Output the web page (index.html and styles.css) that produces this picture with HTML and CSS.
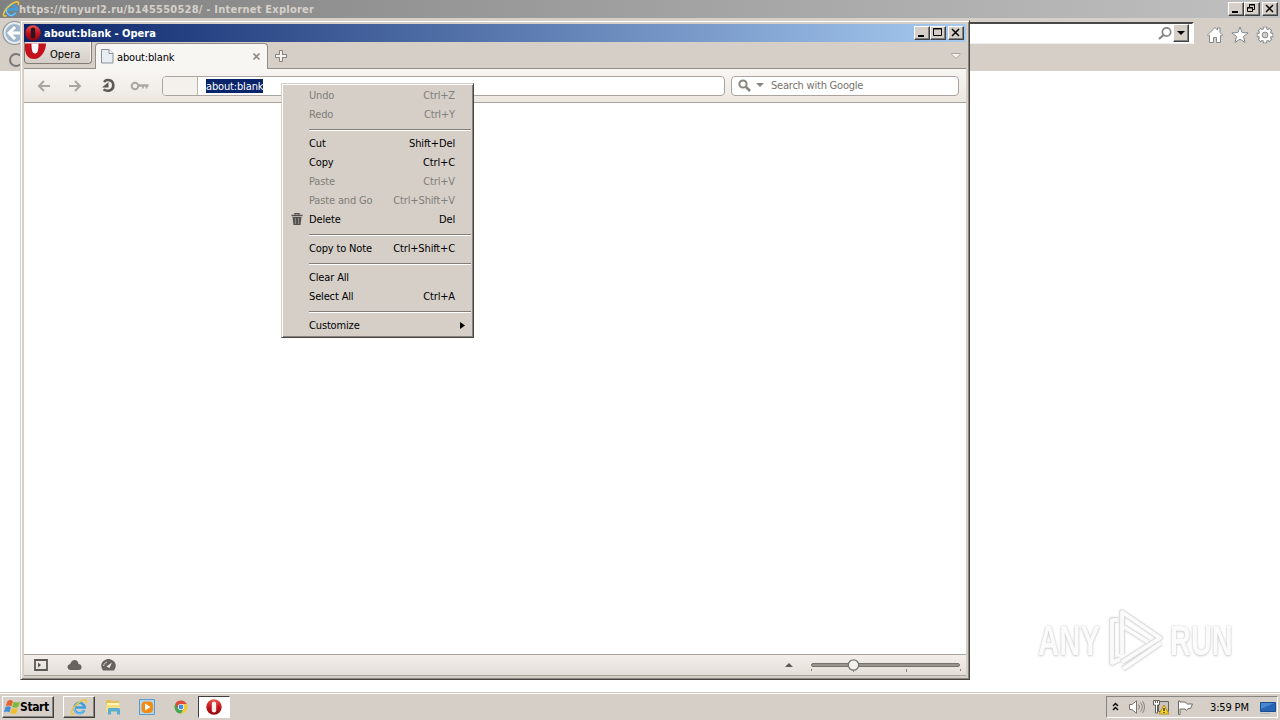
FILE: index.html
```html
<!DOCTYPE html>
<html lang="en">
<head>
<meta charset="utf-8">
<title>Desktop</title>
<link rel="stylesheet" href="styles.css">
</head>
<body>
<svg class="defs" width="0" height="0">
  <defs>
    <linearGradient id="red" x1="0" y1="0" x2="0" y2="1"><stop offset="0" stop-color="#e8574c"/><stop offset=".5" stop-color="#c5141c"/><stop offset="1" stop-color="#8c060c"/></linearGradient>
  </defs>
  <symbol id="ie" viewBox="0 0 18 18">
    <path d="M14.200 12.300A5.200 5.200 0 1 1 14.700 9.600H5.500" fill="none" stroke="#3d9fe2" stroke-width="2.500"/>
    <path d="M13.500 12.600A4.600 4.600 0 0 1 4.800 9" fill="none" stroke="#8fd4f7" stroke-width=".9"/>
    <path d="M4.500 15.600C.5 17.500 .2 13.500 5 8 9.500 3 16 .2 16.500 2.600q.2 1.200-.6 2.600" fill="none" stroke="#efc63c" stroke-width="1.500"/>
  </symbol>
  <symbol id="opera" viewBox="0 0 16 16">
    <circle cx="8" cy="8" r="7.700" fill="url(#red)"/>
    <rect x="5.800" y="2.600" width="4.400" height="10.800" rx="2.200" fill="currentColor"/>
  </symbol>
</svg>
<main class="desktop">
  <section class="ie">
    <header class="ie-title">
      <svg class="ie-logo" width="18" height="18"><use href="#ie"/></svg>
      <span class="ie-name">https://tinyurl2.ru/b145550528/ - Internet Explorer</span>
      <div class="controls">
        <span class="wbtn"><svg width="14" height="12"><path d="M3 9h6" stroke="#000" stroke-width="2"/></svg></span>
        <span class="wbtn"><svg width="14" height="12"><path d="M4.500 4V1.500h5v5H8M4 2h6M2.500 4.500h5v4h-5zM2 5h6" fill="none" stroke="#000"/></svg></span>
        <span class="wbtn gap"><svg width="14" height="12"><path d="M3 2l7 7M10 2L3 9" stroke="#000" stroke-width="1.500"/></svg></span>
      </div>
    </header>
    <div class="ie-nav">
      <svg class="ie-back" width="24" height="28"><circle cx="14.500" cy="14" r="11.500" fill="#e6ecf0" stroke="#8d9296" stroke-width="1.200"/><circle cx="14.500" cy="14" r="9" fill="#9fb6c9"/><path d="M21 14H9m6-6l-6 6 6 6" fill="none" stroke="#fff" stroke-width="3"/></svg>
      <div class="ie-address">
        <svg width="14" height="16"><circle cx="8.500" cy="6" r="4.200" fill="#fff" stroke="#858585" stroke-width="1.700"/><path d="M5.500 9l-4.500 4" stroke="#858585" stroke-width="2.200"/></svg>
        <span class="drop"><svg width="14" height="16"><path d="M3 7h8L7 11z"/></svg></span>
      </div>
      <div class="ie-tools">
        <svg width="18" height="18" viewBox="0 0 18 18"><path d="M1.500 9L9 1.500l2.500 2.500V2h2.500v4.500L16.500 9l-1 1-1-.7V16.500H10.500v-5h-3v5h-4V9.300l-1 .7z" fill="#fff" stroke="#85898c"/></svg>
        <svg width="18" height="18" viewBox="0 0 18 18"><path d="M9 1l2.100 5.500 6 .3-4.600 3.700L14 16.500 9 13.200 4 16.500l1.500-6L.9 6.800l6-.3z" fill="#fff" stroke="#85898c"/></svg>
        <svg width="18" height="18" viewBox="0 0 18 18"><g stroke="#85898c" stroke-width="4.400"><path d="M9 .8v16.400M.8 9h16.400M3.200 3.200l11.600 11.600M14.800 3.200L3.200 14.800"/></g><circle cx="9" cy="9" r="6.200" fill="#fff" stroke="#85898c"/><g stroke="#fff" stroke-width="2.600"><path d="M9 1.600v14.800M1.600 9h14.800M3.800 3.800l10.400 10.400M14.200 3.800L3.800 14.200"/></g><circle cx="9" cy="9" r="2.900" fill="#d5cfc8" stroke="#85898c"/></svg>
      </div>
    </div>
    <div class="ie-tabs"><svg width="24" height="20"><path d="M20 5.500A6 6 0 1 0 20 14.500" fill="none" stroke="#777" stroke-width="2"/></svg></div>
  </section>

  <section class="watermark" aria-label="ANY RUN">
    <span class="any">ANY</span>
    <svg width="62" height="68" viewBox="0 0 62 68"><g fill="none" stroke-linejoin="round"><path d="M16 47V5L54 31 16 55M12 13H6v43l8-4M17 62l38-26M18 20l24 15" stroke="#dcdcdc" stroke-width="5.500"/><path d="M16 47V5L54 31 16 55M12 13H6v43l8-4M17 62l38-26M18 20l24 15" stroke="#fbfbfb" stroke-width="3.700"/></g></svg>
    <span class="run">RUN</span>
  </section>

  <section class="opera">
    <header class="op-title">
      <svg class="op-logo" width="16" height="16"><use href="#opera"/></svg>
      <span class="op-name">about:blank - Opera</span>
      <div class="controls">
        <span class="wbtn"><svg width="14" height="12"><path d="M3 9h6" stroke="#000" stroke-width="2"/></svg></span>
        <span class="wbtn"><svg width="14" height="12"><path d="M2.500 1.500h8v7h-8zM2 2h9" fill="none" stroke="#000"/></svg></span>
        <span class="wbtn gap"><svg width="14" height="12"><path d="M3 2l7 7M10 2L3 9" stroke="#000" stroke-width="1.500"/></svg></span>
      </div>
    </header>
    <div class="op-tabs">
      <div class="op-menu">
        <svg width="22" height="18"><path d="M0 1.500h21C21 9 16 17 9 17 4 17 1 14 0 8z" fill="#c3121c"/><path d="M6.500 1.500h7c0 7-1 10-3.500 10s-3.500-3-3.500-10z" fill="#fff"/></svg>
        <span>Opera</span>
      </div>
      <div class="op-tab">
        <svg width="13" height="15"><path d="M.5.5h7.500l4 4v9.500H.5z" fill="#e7edf2" stroke="#8a9299"/><path d="M8 .5v4h4" fill="#fff" stroke="#8a9299"/></svg>
        <span>about:blank</span>
        <svg class="close" width="9" height="9"><path d="M1.500 1.500l6 6M7.500 1.500l-6 6" stroke="#8e8984" stroke-width="1.700"/></svg>
      </div>
      <svg class="plus" width="14" height="14"><path d="M5.500 1.500h3v4h4v3h-4v4h-3v-4h-4v-3h4z" fill="#f5f2ee" stroke="#84807b"/></svg>
      <svg class="tab-list" width="10" height="8"><path d="M.5 1.500h8.500v1L5.500 6h-1L.5 2.500z" fill="#f5f2ee" stroke="#aaa59e"/></svg>
    </div>
    <div class="op-bar">
      <svg class="b1" width="14" height="12"><path d="M13 6H2m5-5L2 6l5 5" fill="none" stroke="#aaa5a0" stroke-width="2"/></svg>
      <svg class="b2" width="14" height="12"><path d="M1 6h11M7 1l5 5-5 5" fill="none" stroke="#aaa5a0" stroke-width="2"/></svg>
      <svg class="b3" width="15" height="15"><path d="M3 4C5.500 .8 12.300 1.500 12.300 7.500 12.300 13 6 13.700 2.500 11.500" fill="none" stroke="#5c5853" stroke-width="2.600"/><path d="M1 9.500h6.500V4z" fill="#5c5853"/></svg>
      <svg class="b4" width="19" height="10"><circle cx="5" cy="5" r="3.300" fill="none" stroke="#aaa5a0" stroke-width="2"/><path d="M8 4.500h10.500" stroke="#aaa5a0" stroke-width="2.400"/><path d="M13 5v2.500M16.500 5v2.500" stroke="#aaa5a0" stroke-width="1.600"/></svg>
      <div class="address"><i></i><span><mark>about:blank</mark></span></div>
      <div class="search">
        <svg width="13" height="13"><circle cx="5" cy="5" r="3.600" fill="none" stroke="#88847f" stroke-width="2"/><path d="M8 8l4 4" stroke="#88847f" stroke-width="2.500"/></svg>
        <svg class="tri" width="8" height="5"><path d="M0 0h8L4 4z" fill="#88847f"/></svg>
        <span>Search with Google</span>
      </div>
    </div>
    <div class="op-page"></div>
    <footer class="op-status">
      <svg width="14" height="12"><path d="M1 1h12v10H1z" fill="none" stroke="#5c5853" stroke-width="1.800"/><path d="M4 3.500L7 6 4 8.500z" fill="#5c5853"/></svg>
      <svg width="15" height="12"><path d="M3 11a3 3 0 0 1-.5-5.800C4 5 4 1 7.500 1s3.800 3 4 4C15.500 5 15.500 11 12 11z" fill="#68635e"/></svg>
      <svg width="15" height="12"><path d="M2 11.500C-3 4 4 0 7.500 0S18 4 13 11.500z" fill="#68635e"/><path d="M5.500 7.500L11 3.500 8.500 9z" fill="#f1ece8"/><path d="M2.500 7l1-2.500L6 3" stroke="#d9d5d0" fill="none"/></svg>
      <svg class="up" width="8" height="4"><path d="M0 4h8L4 0z" fill="#5c5853"/></svg>
      <svg class="slider" width="152" height="18"><rect x="1.500" y="7.500" width="148" height="3" rx="1.500" fill="#99948e" stroke="#77726d"/><path d="M1.500 13v2M43.500 14v2M96.500 13v3M150.500 13v2" stroke="#88837e"/><circle cx="43.500" cy="9" r="5.200" fill="#f3f1ee" stroke="#77726d" stroke-width="1.300"/></svg>
    </footer>
  </section>

  <ul class="menu">
    <li class="off"><span>Undo</span><kbd>Ctrl+Z</kbd></li>
    <li class="off"><span>Redo</span><kbd>Ctrl+Y</kbd></li>
    <li class="sep"></li>
    <li><span>Cut</span><kbd>Shift+Del</kbd></li>
    <li><span>Copy</span><kbd>Ctrl+C</kbd></li>
    <li class="off"><span>Paste</span><kbd>Ctrl+V</kbd></li>
    <li class="off"><span>Paste and Go</span><kbd>Ctrl+Shift+V</kbd></li>
    <li><svg class="bin" width="12" height="13"><path d="M4 1.500V.5h4v1M.5 2.500h11" stroke="#55514c" stroke-width="1.500" fill="none"/><path d="M1.500 4h9L9.500 12h-7z" fill="#55514c"/><path d="M4.500 5v6M7.500 5v6" stroke="#8d8883"/></svg><span>Delete</span><kbd>Del</kbd></li>
    <li class="sep"></li>
    <li><span>Copy to Note</span><kbd>Ctrl+Shift+C</kbd></li>
    <li class="sep"></li>
    <li><span>Clear All</span></li>
    <li><span>Select All</span><kbd>Ctrl+A</kbd></li>
    <li class="sep"></li>
    <li><span>Customize</span><svg class="more" width="5" height="7"><path d="M0 0v7l5-3.500z"/></svg></li>
  </ul>

  <nav class="taskbar">
    <div class="start">
      <svg width="16" height="16"><path d="M3.500 2q3-2 5.500.2L7.300 7.500q-2.500-2-5.600-.2z" fill="#e7632e"/><path d="M9.700 2.800q3 1.600 6.200 0L14.200 8q-3 1.600-6 0z" fill="#7ab93a"/><path d="M1.400 8.200q3-1.800 5.600 0L5.400 13.500q-2.500-2-5.400-.2z" fill="#438dd5"/><path d="M7.900 8.900q3 1.600 6 0l-1.600 5.300q-3 1.500-6 0z" fill="#f2bd2d"/></svg>
      <span>Start</span>
    </div>
    <div class="task raised"><svg width="18" height="18"><use href="#ie"/></svg></div>
    <div class="task"><svg width="16" height="16"><path d="M1 3l1-2h4l1 1h7v11H1z" fill="#e6bf55"/><path d="M2 4h12v3H2z" fill="#fff4ba"/><path d="M1 6h14v7H1z" fill="#f5dd82"/><path d="M3 15.500V10.500Q3 9 4.500 9h9q1.500 0 1.500 1.500v5h-3v-3H6v3z" fill="#55add8"/></svg></div>
    <div class="task"><svg width="16" height="16"><path d="M.5.5h15v15H.5z" fill="#b4d6ec" stroke="#5c9bcc"/><rect x="2.500" y="2.500" width="11.500" height="11.500" rx="4" fill="#f28b13"/><path d="M6 4.500v7L11.500 8z" fill="#fff"/></svg></div>
    <div class="task"><svg width="14" height="14" viewBox="0 0 14 14"><circle cx="7" cy="7" r="6.500" fill="#f4ca32"/><path d="M7 7L1.400 3.700A6.500 6.500 0 0 0 7 13.500L9.500 9z" fill="#43a655"/><path d="M1.300 3.800A6.500 6.500 0 0 1 12.700 4H7L4 8.500z" fill="#dd4b3d"/><circle cx="7" cy="7" r="3.100" fill="#fff"/><circle cx="7" cy="7" r="2.400" fill="#438ce0"/></svg></div>
    <div class="task active"><svg width="16" height="16"><use href="#opera"/></svg></div>
    <div class="tray">
      <svg class="chev" width="7" height="9"><path d="M1 4l2.500-2.500L6 4M1 8l2.500-2.500L6 8" stroke="#000" stroke-width="1.400" fill="none"/></svg>
      <svg class="vol" width="16" height="14"><path d="M.5 4.500H3L7.500.8v12.400L3 9.500H.5z" fill="#fff" stroke="#77736e"/><path d="M9.500 4.500q2 2.500 0 5M11.500 2.500q3.500 4.500 0 9M13.500 1q4 6 0 12" fill="none" stroke="#88847f"/></svg>
      <svg class="net" width="17" height="16"><path d="M5.500 2.500h10v10h-10z" fill="#c9c5be" stroke="#66625d"/><path d="M.5 1.500h6v4.500h-2v8h-2v-8h-2z" fill="#fff" stroke="#66625d"/><path d="M2.500 1v3M4.500 1v3" stroke="#66625d"/><path d="M11 6l5 9H6z" fill="#f7d326" stroke="#b69115"/><path d="M11 9v3M11 13v1" stroke="#222" stroke-width="1.300"/></svg>
      <svg class="flag" width="17" height="15"><path d="M1.500 1v13.500h1.500V9h5l1.500 1.500L11 8.500h2.500l2-4.500h-5L8 2H3V1z" fill="#fff" stroke="#6e6a65"/></svg>
      <time>3:59 PM</time>
      <svg class="show" width="16" height="14"><path d="M.5 1.500h15v9H.5z" fill="#2864b4" stroke="#194c91"/><path d="M1 2h13L1 8z" fill="#4788d0"/><path d="M0 12.500h10" stroke="#a9b8cb"/></svg>
    </div>
  </nav>
</main>
</body>
</html>
```

FILE: styles.css
```css
* { box-sizing: border-box; }
body { margin: 0; font: 11px/14px "DejaVu Sans Condensed", "DejaVu Sans", sans-serif; font-stretch: condensed; color: #000; letter-spacing: -0.15px; overflow: hidden; }
svg { display: block; flex: none; }
.defs { position: absolute; }
.desktop { position: relative; width: 1280px; height: 720px; background: #fff; overflow: hidden; }

.ie { position: absolute; inset: 0 0 auto; height: 71px; background: #d5cfc8; }
.ie-title { height: 18px; display: flex; align-items: center; padding: 0 2px; background: linear-gradient(90deg, #808080, #c0c0c0); }
.ie-name { margin: 1px 0 0 -1px; font-weight: bold; color: #d6d1ca; letter-spacing: 0.23px; white-space: nowrap; }
.controls { margin-left: auto; display: flex; }
.wbtn { width: 16px; height: 14px; background: #d5cfc8; border: 1px solid; border-color: #fff #404040 #404040 #fff; box-shadow: inset -1px -1px #808080; }
.wbtn.gap { margin-left: 2px; }
.ie-nav { display: flex; height: 30px; padding-top: 4px; }
.ie-back { margin: -3px 0 0; }
.ie-address { width: 1170px; height: 22px; background: #fff; border-top: 2px solid #484848; border-right: 2px solid #fff; border-bottom: 1px solid #eee; display: flex; justify-content: flex-end; padding: 0 3px 0 0; gap: 1px; }
.ie-address svg { margin-top: 2px; }
.drop { width: 16px; height: 18px; background: #d5cfc8; border: 1px solid; border-color: #fff #404040 #404040 #fff; box-shadow: inset -1px -1px #808080; }
.ie-address .drop svg { margin-top: -1px; }
.ie-tools { display: flex; gap: 7px; margin: 4px 0 0 12px; }
.ie-tabs { padding: 2px 0 0; }

.watermark { position: absolute; left: 1038px; top: 607px; width: 198px; height: 68px; display: flex; align-items: center; justify-content: space-between; font: bold 42px/68px "Liberation Sans", sans-serif; color: #fbfbfb; letter-spacing: 0; text-shadow: 0 0 2px #c4c4c4, 0 1px 3px #d0d0d0; }
.watermark span { display: block; width: 66px; transform-origin: 0 50%; }
.watermark .any { transform: scaleX(.7); }
.watermark .run { transform: scaleX(.69); }
.watermark svg { filter: drop-shadow(0 0 1px #ddd); }

.opera { position: absolute; left: 20px; top: 20px; width: 950px; height: 660px; background: #d5cfc8; border: 1px solid; border-color: #d5cfc8 #484540 #484540 #d5cfc8; padding: 3px; box-shadow: inset 1px 1px #fff, inset -1px -1px #88847f; display: flex; flex-direction: column; }
.op-title { height: 18px; flex: none; display: flex; align-items: center; padding: 0 2px 0 1px; background: linear-gradient(90deg, #0a246a, #a6caf0); color: #fff; }
.op-name { margin: 1px 0 0 3px; font-weight: bold; letter-spacing: 0; }
.op-logo { color: #2a1420; }
.op-tabs { height: 27px; flex: none; display: flex; border-bottom: 1px solid #918c86; }
.op-menu { width: 68px; height: 22px; border: 1px solid #817c76; border-top: 0; border-radius: 0 0 4px 4px; display: flex; background: linear-gradient(#e8e4df, #d4cec7); box-shadow: inset -1px 0 #f4f1ee; }
.op-menu span { margin: 6px 0 0 3px; letter-spacing: 0; }
.op-tab { width: 173px; height: 26px; margin: 1px 0 -1px 3px; border: 1px solid #918c86; border-bottom: 0; border-radius: 4px 4px 0 0; background: #f8f6f3; display: flex; align-items: center; padding: 0 6px 0 5px; }
.op-tab span { margin: 2px 0 0 3px; }
.op-tab .close { margin-left: auto; }
.plus { margin: 7px 0 0 6px; }
.tab-list { margin: 10px 5px 0 auto; }
.op-bar { height: 34px; flex: none; border-bottom: 1px solid #a8a39d; background: linear-gradient(#f8f6f3, #ede7e1); display: flex; align-items: center; padding: 0 7px 0 13px; }
.b2 { margin-left: 17px; }
.b3 { margin-left: 19px; }
.b4 { margin-left: 14px; }
.address { width: 563px; height: 20px; margin-left: 13px; border: 1px solid #aaa5a0; border-radius: 4px; background: #fff; display: flex; align-items: center; overflow: hidden; }
.address i { width: 35px; height: 20px; background: #f4f1ed; border-right: 1px solid #b8b4af; }
.address span { margin-left: 8px; }
.address mark { display: block; background: #0a246a; color: #fff; height: 14px; line-height: 15px; }
.search { width: 228px; height: 20px; margin-left: 6px; border: 1px solid #aaa5a0; border-radius: 4px; background: #fff; display: flex; align-items: center; padding-left: 6px; color: #77736e; }
.tri { margin-left: 5px; }
.search span { margin: 1px 0 0 7px; letter-spacing: -0.22px; }
.op-page { flex: 1; background: #fff; }
.op-status { height: 22px; flex: none; border-top: 1px solid #a8a39d; border-bottom: 1px solid #a8a39d; background: linear-gradient(#f3eeea, #e4dfd9); display: flex; align-items: center; padding: 0 4px 0 10px; gap: 19px; }
.op-status .up { margin-left: auto; }
.op-status .slider { margin-left: -2px; }

.menu { position: absolute; left: 281px; top: 83px; width: 193px; height: 255px; margin: 0; padding: 2px 1px 1px; list-style: none; background: #d5cfc8; border: 1px solid; border-color: #d5cfc8 #484540 #484540 #d5cfc8; box-shadow: inset 1px 1px #fff, inset -1px -1px #88847f; }
.menu li { height: 19px; padding: 0 17px 0 26px; display: flex; align-items: center; position: relative; white-space: nowrap; }
.menu span { margin-right: auto; }
.menu kbd { font: inherit; }
.menu .off { color: #827e79; }
.menu .sep { height: 10px; padding: 5px 1px 0 26px; display: block; }
.menu .sep::after { content: ""; display: block; height: 1px; background: #827e79; border-bottom: 1px solid #fff; }
.bin { position: absolute; left: 8px; top: 3px; }
.more { margin-right: -10px; }

.taskbar { position: absolute; left: 0; right: 0; bottom: 0; height: 28px; background: #d5cfc8; border-top: 1px solid #cbc7c0; box-shadow: inset 0 1px #fff; padding: 3px 2px 2px; display: flex; align-items: flex-start; }
.start, .task { height: 22px; display: flex; align-items: center; }
.start { width: 52px; padding-left: 1px; font: bold 12px/14px "DejaVu Sans Condensed", sans-serif; letter-spacing: -0.4px; margin-right: 9px; }
.start, .raised { border: 1px solid; border-color: #fff #404040 #404040 #fff; box-shadow: inset -1px -1px #88847f; }
.task { width: 34px; justify-content: center; }
.raised { width: 32px; }
.raised + .task { margin-left: 1px; }
.active { color: #fff0ed; background: #fff; border: 1px solid; border-color: #404040 #fff #fff #404040; width: 32px; }
.tray { margin-left: auto; width: 172px; height: 22px; border: 1px solid; border-color: #88847f #fff #fff #88847f; display: flex; align-items: center; padding: 0 0 0 5px; }
.chev { margin-top: -2px; }
.vol { margin-left: 10px; }
.net { margin-left: 8px; }
.flag { margin-left: 7px; }
.tray time { margin: 1px 0 0 16px; width: 40px; white-space: nowrap; }
.show { margin: 1px 0 0 10px; }
```
